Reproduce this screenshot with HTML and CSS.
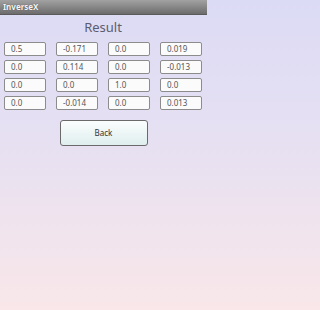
FILE: index.html
```html
<!DOCTYPE html>
<html>
<head>
<meta charset="utf-8">
<meta name="viewport" content="width=207">
<link rel="stylesheet" href="styles.css">
</head>
<body>
<div class="screen">
  <div class="titlebar">InverseX</div>
  <div class="content">
    <div class="heading">Result</div>
    <div class="grid">
      <div class="cell">0.5</div>
      <div class="cell">-0.171</div>
      <div class="cell">0.0</div>
      <div class="cell">0.019</div>
      <div class="cell">0.0</div>
      <div class="cell">0.114</div>
      <div class="cell">0.0</div>
      <div class="cell">-0.013</div>
      <div class="cell">0.0</div>
      <div class="cell">0.0</div>
      <div class="cell">1.0</div>
      <div class="cell">0.0</div>
      <div class="cell">0.0</div>
      <div class="cell">-0.014</div>
      <div class="cell">0.0</div>
      <div class="cell">0.013</div>
    </div>
    <div class="actions">
      <div class="button">Back</div>
    </div>
  </div>
</div>
</body>
</html>
```
FILE: styles.css
```css
html, body {
  margin: 0;
  padding: 0;
  height: 100%;
}
body {
  font-family: "Noto Sans", "Open Sans", sans-serif;
  background: linear-gradient(to bottom, #dcdbf5 0%, #e6e0f2 45%, #f9e7e9 100%);
}
.screen {
  width: 207px;
  height: 310px;
  background: linear-gradient(to bottom, #dcdbf5 0%, #e6e0f2 45%, #f9e7e9 100%);
}
.titlebar {
  height: 15px;
  box-sizing: border-box;
  padding-left: 3px;
  font-size: 8px;
  font-weight: bold;
  line-height: 14px;
  color: #f6f6f6;
  text-shadow: 0 0 1px #444;
  background: linear-gradient(to bottom, #a2a2a2, #6c6c6c);
  border-bottom: 1px solid #5a5a5a;
}
.content {
  padding: 0 5px 0 4px;
}
.heading {
  margin-top: 4px;
  height: 23px;
  line-height: 16px;
  text-align: center;
  font-size: 13px;
  color: #5c5c6e;
}
.grid {
  display: grid;
  grid-template-columns: repeat(4, 42px);
  grid-auto-rows: 14px;
  column-gap: 10px;
  row-gap: 4px;
}
.cell {
  box-sizing: border-box;
  border: 1px solid #8c8c8c;
  border-radius: 2px;
  background: #fbfbfb;
  font-size: 8px;
  line-height: 12px;
  padding-left: 6px;
  color: #555;
}
.actions {
  display: flex;
  justify-content: center;
  margin-top: 10px;
}
.button {
  width: 88px;
  height: 26px;
  box-sizing: border-box;
  border: 1px solid #6a6a6a;
  border-radius: 3px;
  background: linear-gradient(to bottom, #fbfdfd, #dfeeee);
  font-size: 8px;
  line-height: 24px;
  text-align: center;
  color: #333;
  margin-left: 1px;
}
```
